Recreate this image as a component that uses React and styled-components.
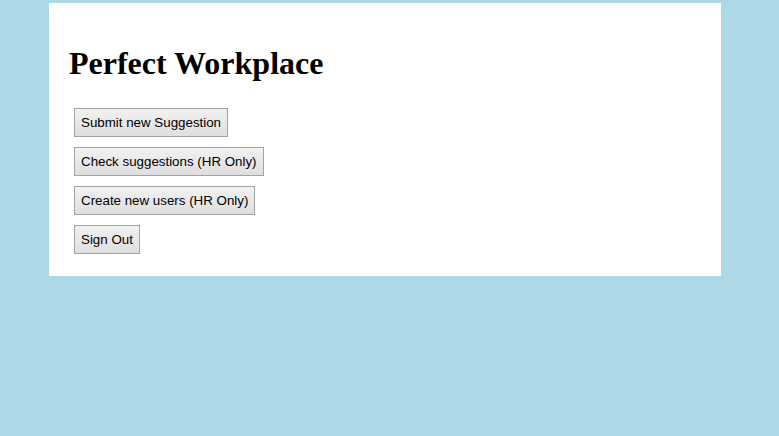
import React from 'react'
import styled, { createGlobalStyle } from 'styled-components'

const GlobalStyle = createGlobalStyle`
  html, body {
    margin: 0;
    padding: 0;
    background: #add8e6;
  }
`

const Page = styled.div`
  padding: 3px 0 0 49px;
`

const Card = styled.div`
  width: 672px;
  box-sizing: border-box;
  background: #ffffff;
  padding: 23px 20px 22px 20px;
`

const Title = styled.h1`
  margin: 19px 0 26px 0;
  font-family: 'Liberation Serif', serif;
  font-size: 32px;
  font-weight: bold;
  color: #000;
`

const Actions = styled.div`
  display: flex;
  flex-direction: column;
  align-items: flex-start;
  gap: 10px;
  padding-left: 5px;
`

const Button = styled.button`
  height: 29px;
  padding: 0 6px;
  font-family: 'Liberation Sans', Arial, sans-serif;
  font-size: 13.333px;
  color: #000;
  border: 1px solid #a3a3a3;
  border-radius: 0;
  background: linear-gradient(#f2f2f2, #dedede);
  cursor: pointer;
`

export default function App() {
  return (
    <>
      <GlobalStyle />
      <Page>
        <Card>
          <Title>Perfect Workplace</Title>
          <Actions>
            <Button>Submit new Suggestion</Button>
            <Button>Check suggestions (HR Only)</Button>
            <Button>Create new users (HR Only)</Button>
            <Button>Sign Out</Button>
          </Actions>
        </Card>
      </Page>
    </>
  )
}
